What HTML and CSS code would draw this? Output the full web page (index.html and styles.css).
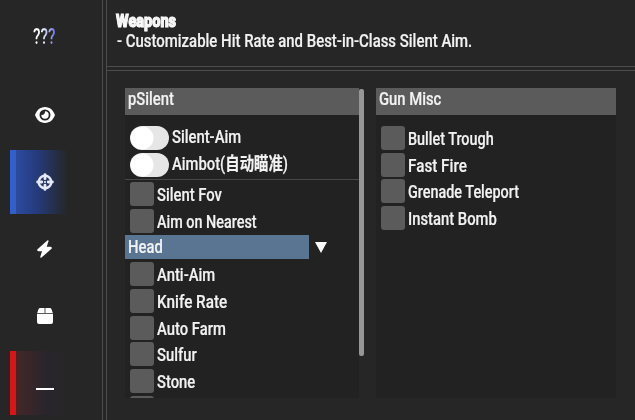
FILE: index.html
```html
<!DOCTYPE html>
<html>
<head>
	<meta charset="UTF-8">
	<title>Weapons</title>
	<link rel="stylesheet" href="styles.css">
</head>

<body>
<div class="menu">
	<div class="sidebar">
		<div class="logo"><span>???</span></div>
		<div class="tab">
			<svg width="20" height="16" viewBox="0 0 20 16"><path fill="#fff" fill-rule="evenodd" d="M10 0C5 0 1.500 3.600 0 8C1.500 12.400 5 16 10 16S18.500 12.400 20 8C18.500 3.600 15 0 10 0ZM10 2.500A5.500 5.500 0 1 1 10 13.500A5.500 5.500 0 1 1 10 2.500ZM10 4.300C10.300 6.500 8.500 8.200 6.300 8A3.700 3.700 0 1 0 10 4.300Z"/></svg>
		</div>
		<div class="tab active">
			<svg width="18" height="18" viewBox="0 0 18 18" fill="none" stroke="#e4e8f7"><circle cx="9" cy="9" r="6.300" stroke-width="2.400"/><path stroke-width="2.800" stroke-linecap="round" d="M9 1.600V5.800M9 12.200V16.400M1.600 9H5.800M12.200 9H16.400"/><circle cx="9" cy="9" r="1.100" fill="#e4e8f7" stroke="none"/></svg>
		</div>
		<div class="tab">
			<svg width="15" height="18" viewBox="0 0 15 18"><path fill="#fff" stroke="#fff" stroke-width="1.500" stroke-linejoin="round" d="M10.800 1L1 9.800Q0.800 10.500 1.600 10.600H6L4 17L14 8.300Q14.200 7.500 13.400 7.400H8.700Z"/></svg>
		</div>
		<div class="tab">
			<svg width="16" height="16" viewBox="0 0 16 16" fill="#fff"><path d="M3.300 0H7.600V5H0.200L1.500 1.300Q2 0 3.300 0ZM8.400 0H12.700Q14 0 14.500 1.300L15.800 5H8.400ZM0 5.700H16V14Q16 16 14 16H2Q0 16 0 14Z"/></svg>
		</div>
		<div class="tab close"><i class="minus"></i></div>
	</div>
	<div class="main">
		<div class="top">
			<div class="title"><span>Weapons</span></div>
			<div class="desc"><span>- Customizable Hit Rate and Best-in-Class Silent Aim.</span></div>
		</div>
		<div class="content">
			<div class="panel">
				<div class="head"><span>pSilent</span></div>
				<div class="list">
					<div class="row"><i class="toggle"></i><span>Silent-Aim</span></div>
					<div class="row"><i class="toggle"></i><span>Aimbot(<b>自动瞄准</b>)</span></div>
					<div class="line"></div>
					<div class="row"><i class="box"></i><span>Silent Fov</span></div>
					<div class="row"><i class="box"></i><span class="tight">Aim on Nearest</span></div>
					<div class="row combo"><div class="select"><span>Head</span></div><i class="arrow"></i></div>
					<div class="row"><i class="box"></i><span>Anti-Aim</span></div>
					<div class="row"><i class="box"></i><span class="wide">Knife Rate</span></div>
					<div class="row"><i class="box"></i><span>Auto Farm</span></div>
					<div class="row"><i class="box"></i><span>Sulfur</span></div>
					<div class="row"><i class="box"></i><span>Stone</span></div>
					<div class="row"><i class="box"></i></div>
				</div>
			</div>
			<div class="scroll"></div>
			<div class="panel misc">
				<div class="head"><span>Gun Misc</span></div>
				<div class="list">
					<div class="row"><i class="box"></i><span class="tight">Bullet Trough</span></div>
					<div class="row"><i class="box"></i><span class="wide">Fast Fire</span></div>
					<div class="row"><i class="box"></i><span class="tight">Grenade Teleport</span></div>
					<div class="row"><i class="box"></i><span>Instant Bomb</span></div>
				</div>
			</div>
		</div>
	</div>
</div>
</body>
</html>
```
FILE: styles.css
```css
* {
	box-sizing: border-box;
}
body {
	margin: 0;
	background: #262626;
	color: #f2f2f2;
	font: 500 18.500px/24px Roboto, "Noto Sans CJK SC", sans-serif;
}
.menu {
	display: flex;
	width: 635px;
	height: 420px;
	overflow: hidden;
}
/* narrow lettering */
span {
	display: inline-block;
	white-space: nowrap;
	transform: scaleX(0.8);
	transform-origin: 0 50%;
	-webkit-text-stroke: 0.200px #f2f2f2;
}
.tight {
	transform: scaleX(0.778);
}
.wide {
	transform: scaleX(0.825);
}
.sidebar {
	width: 107px;
	flex: none;
	padding-left: 10px;
	box-shadow: inset -1px 0 #4c4c4c, inset -4px 0 #262626, inset -5px 0 #4c4c4c;
}
.logo {
	height: 83px;
	padding: 26px 0 0 23px;
}
.logo span {
	font: 500 22px/22px Roboto, sans-serif;
	transform: scaleX(0.7);
	background: linear-gradient(90deg, #fff 35%, #6a70e0);
	background-clip: text;
	-webkit-background-clip: text;
	-webkit-text-stroke: 0;
	color: transparent;
}
.tab {
	display: flex;
	align-items: center;
	justify-content: center;
	width: 58px;
	height: 64px;
	margin-bottom: 3px;
	padding-left: 11px;
}
.active {
	padding-left: 5px;
	border-left: 6px solid #315fce;
	background: linear-gradient(90deg, #2c4b9f, #253b7c 40%, #262626);
}
.close {
	padding-left: 5px;
	border-left: 6px solid #dd1414;
	background: linear-gradient(90deg, #442727, #28252d 60%, #262626);
}
.minus {
	width: 18px;
	height: 2px;
	margin-top: 12px;
	background: #fff;
}
.main {
	flex: 1;
}
.top {
	height: 71px;
	padding: 9px 0 0 9px;
	box-shadow: inset 0 -1px #4c4c4c, inset 0 -4px #262626, inset 0 -5px #4c4c4c;
}
.title {
	height: 20px;
}
.title span {
	font-weight: 900;
	font-size: 17.500px;
	transform: scaleX(0.83);
	-webkit-text-stroke: 1px #fff;
}
.desc {
	padding-left: 1px;
}
.desc span {
	transform: scaleX(0.807);
}
.content {
	display: flex;
	padding: 17px 0 0 18px;
}
.panel {
	width: 234px;
	height: 310px;
	background: #222;
	overflow: hidden;
}
.misc {
	width: 240px;
	margin-left: 12px;
}
.head {
	height: 27px;
	padding-left: 3px;
	line-height: 22px;
	background: #5b5b5b;
}
.list {
	display: flex;
	flex-direction: column;
	gap: 2.700px;
	padding-top: 11px;
}
.row {
	display: flex;
	flex: none;
	gap: 3px;
	height: 24px;
	padding-left: 5px;
}
.row > span {
	padding-top: 1px;
}
.row > .toggle + span {
	padding-top: 0;
	margin-top: -1px;
}
b {
	font-size: 18px;
	line-height: 20px;
}
.box {
	width: 24px;
	height: 24px;
	border-radius: 3px;
	background: #5b5b5b;
}
.toggle {
	width: 39px;
	height: 24px;
	border-radius: 12px;
	background: radial-gradient(circle at 12px 12px, #fff 11px, #e6e6e6 12px);
}
.line {
	height: 1px;
	margin-bottom: -1px;
	background: #484848;
}
.combo {
	padding-left: 0;
	gap: 6px;
	align-items: center;
}
.select {
	width: 184px;
	height: 24px;
	padding-left: 3px;
	background: #597592;
}
.arrow {
	border: 6.500px solid transparent;
	border-top: 11px solid #fff;
	border-bottom: 0;
}
.scroll {
	width: 5px;
	height: 267px;
	margin-top: 1px;
	border-radius: 2px;
	background: #969696;
}
```
